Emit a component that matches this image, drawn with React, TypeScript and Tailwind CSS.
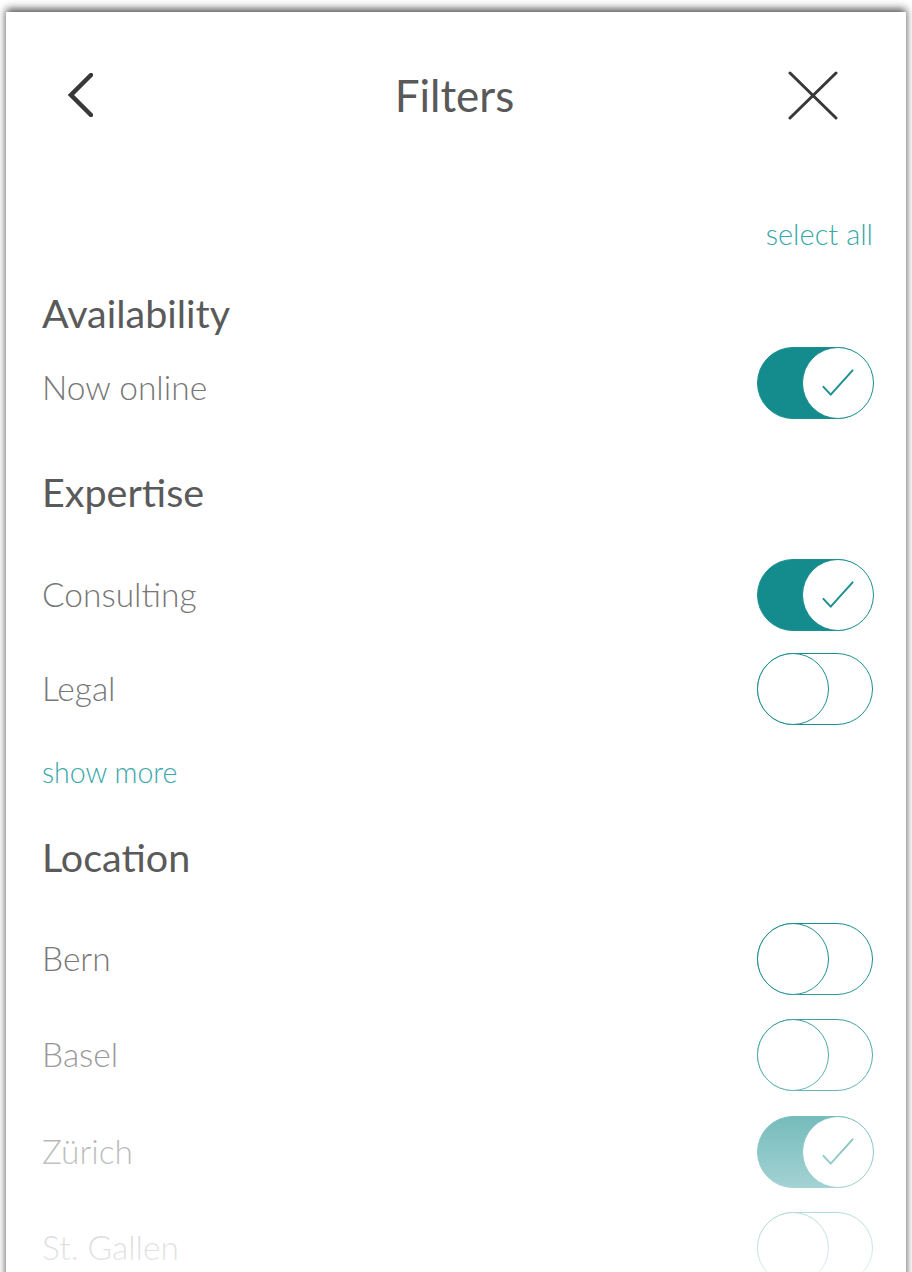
import React from "react";

const TEAL = "#1a8f90";

function Toggle({ on }: { on: boolean }) {
  return (
    <div
      className={`flex h-[72px] w-[116px] shrink-0 items-center rounded-full border-[1.5px] border-[#1a8f90] ${
        on ? "justify-end bg-[#148c8d]" : "justify-start bg-white"
      }`}
    >
      <div className="-m-[1.5px] flex h-[72px] w-[72px] items-center justify-center rounded-full border-[1.5px] border-[#1a8f90] bg-white">
        {on && (
          <svg width="72" height="72" viewBox="0 0 72 72" fill="none">
            <polyline
              points="21,40 28.5,48 51,23"
              stroke={TEAL}
              strokeWidth="2"
              strokeLinecap="round"
              strokeLinejoin="round"
            />
          </svg>
        )}
      </div>
    </div>
  );
}

function Row({ label, on, mt, low }: { label: string; on: boolean; mt: string; low?: boolean }) {
  return (
    <div className={`flex h-[72px] items-center justify-between ${mt}`}>
      <span
        className={`${low ? "pt-[8px]" : "pb-[2px]"} text-[33.5px] font-light leading-[40px] text-[#777777]`}
      >
        {label}
      </span>
      <Toggle on={on} />
    </div>
  );
}

export default function App() {
  return (
    <div className="relative h-[1272px] w-[912px] overflow-hidden bg-white font-['Lato',sans-serif]">
      <div className="relative ml-[6px] mt-[12px] h-[1300px] w-[900px] bg-white shadow-[0_-3px_8px_rgba(0,0,0,0.7)]">
        <header className="grid h-[166px] grid-cols-[1fr_auto_1fr] items-center pl-[62px] pr-[68px]">
          <div className="flex justify-start">
            <svg width="25" height="44" viewBox="0 0 25 44" fill="none">
              <polyline
                points="23,2 3,22 23,42"
                stroke="#383838"
                strokeWidth="4.5"
                strokeLinecap="round"
                strokeLinejoin="miter"
              />
            </svg>
          </div>
          <h1 className="pl-[3px] text-[44px] font-normal leading-[52px] text-[#595959]">Filters</h1>
          <div className="flex justify-end">
            <svg width="50" height="49" viewBox="0 0 50 49" fill="none">
              <line x1="2" y1="2" x2="48" y2="47" stroke="#383838" strokeWidth="3" strokeLinecap="round" />
              <line x1="48" y1="2" x2="2" y2="47" stroke="#383838" strokeWidth="3" strokeLinecap="round" />
            </svg>
          </div>
        </header>

        <div className="pl-[36px] pr-[33px]">
          <div className="mt-[38px] flex h-[36px] justify-end">
            <span className="text-[29px] font-light leading-[36px] text-[#3aa8aa]">select all</span>
          </div>

          <h2 className="mt-[37px] text-[39.5px] font-normal leading-[48px] text-[#5a5a5a]">Availability</h2>
          <Row label="Now online" on={true} mt="mt-[10px]" low />

          <h2 className="mt-[49px] text-[39.5px] font-normal leading-[48px] text-[#5a5a5a]">Expertise</h2>
          <Row label="Consulting" on={true} mt="mt-[43px]" />
          <Row label="Legal" on={false} mt="mt-[22px]" />

          <div className="mt-[29px] h-[36px]">
            <span className="text-[28.5px] font-light leading-[36px] text-[#3aa8aa]">show more</span>
          </div>

          <h2 className="mt-[43px] text-[39.5px] font-normal leading-[48px] text-[#5a5a5a]">Location</h2>
          <Row label="Bern" on={false} mt="mt-[42px]" />
          <Row label="Basel" on={false} mt="mt-[24px]" />
          <Row label="Zürich" on={true} mt="mt-[25px]" />
          <Row label="St. Gallen" on={false} mt="mt-[24px]" />
        </div>

        <div className="pointer-events-none absolute left-0 right-0 top-[953px] h-[347px] bg-gradient-to-b from-white/0 to-white/95" />
      </div>
    </div>
  );
}
